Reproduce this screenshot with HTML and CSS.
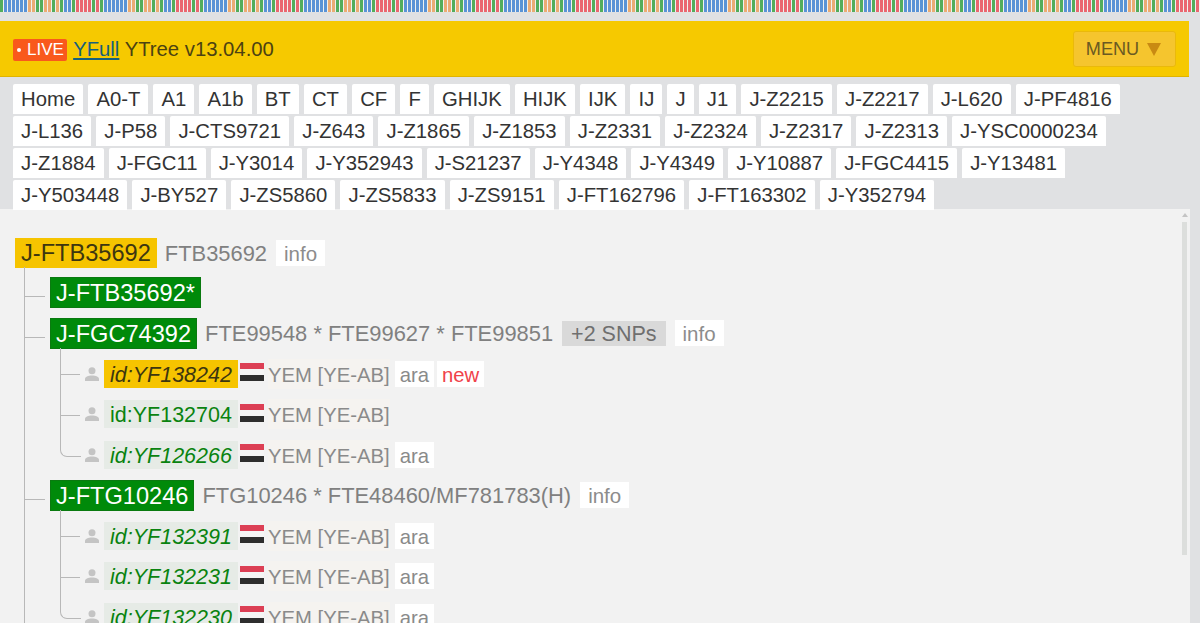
FILE: index.html
```html
<!DOCTYPE html>
<html lang="en">
<head>
<meta charset="utf-8">
<title>YFull YTree v13.04.00</title>
<link rel="stylesheet" href="styles.css">
</head>
<body>
<div class="stripe"></div>
<header class="topbar">
  <div class="brand"><span class="live"><span class="dot"></span>LIVE</span> <a class="yfull" href="#">YFull</a> YTree v13.04.00</div>
  <button class="menu">MENU <span class="arrow"></span></button>
</header>
<nav class="tabs">
  <a>Home</a><a>A0-T</a><a>A1</a><a>A1b</a><a>BT</a><a>CT</a><a>CF</a><a>F</a><a>GHIJK</a><a>HIJK</a><a>IJK</a><a>IJ</a><a>J</a><a>J1</a><a>J-Z2215</a><a>J-Z2217</a><a>J-L620</a><a>J-PF4816</a>
  <a>J-L136</a><a>J-P58</a><a>J-CTS9721</a><a>J-Z643</a><a>J-Z1865</a><a>J-Z1853</a><a>J-Z2331</a><a>J-Z2324</a><a>J-Z2317</a><a>J-Z2313</a><a>J-YSC0000234</a>
  <a>J-Z1884</a><a>J-FGC11</a><a>J-Y3014</a><a>J-Y352943</a><a>J-S21237</a><a>J-Y4348</a><a>J-Y4349</a><a>J-Y10887</a><a>J-FGC4415</a><a>J-Y13481</a>
  <a>J-Y503448</a><a>J-BY527</a><a>J-ZS5860</a><a>J-ZS5833</a><a>J-ZS9151</a><a>J-FT162796</a><a>J-FT163302</a><a>J-Y352794</a>
</nav>
<main class="panel">
  <div class="tree">
    <div class="root"><span class="node gold">J-FTB35692</span><span class="snps">FTB35692</span><span class="info">info</span></div>
    <ul class="lvl1">
      <li class="first"><div class="row"><span class="node green">J-FTB35692*</span></div></li>
      <li>
        <div class="row"><span class="node green">J-FGC74392</span><span class="snps">FTE99548 * FTE99627 * FTE99851</span><span class="more">+2 SNPs</span><span class="info">info</span></div>
        <ul class="lvl2">
          <li class="sample"><svg class="person" viewBox="0 0 14 14"><circle cx="7" cy="3.700" r="3.500"/><path d="M0 14v-2c0-2 3-3.500 7-3.500s7 1.500 7 3.500v2z"/></svg><span class="sid goldid">id:YF138242</span><span class="flag"></span><span class="geo">YEM [YE-AB]</span><span class="lang">ara</span><span class="new">new</span></li>
          <li class="sample"><svg class="person" viewBox="0 0 14 14"><circle cx="7" cy="3.700" r="3.500"/><path d="M0 14v-2c0-2 3-3.500 7-3.500s7 1.500 7 3.500v2z"/></svg><span class="sid upright">id:YF132704</span><span class="flag"></span><span class="geo">YEM [YE-AB]</span></li>
          <li class="sample"><svg class="person" viewBox="0 0 14 14"><circle cx="7" cy="3.700" r="3.500"/><path d="M0 14v-2c0-2 3-3.500 7-3.500s7 1.500 7 3.500v2z"/></svg><span class="sid">id:YF126266</span><span class="flag"></span><span class="geo">YEM [YE-AB]</span><span class="lang">ara</span></li>
        </ul>
      </li>
      <li>
        <div class="row"><span class="node green">J-FTG10246</span><span class="snps">FTG10246 * FTE48460/MF781783(H)</span><span class="info">info</span></div>
        <ul class="lvl2">
          <li class="sample"><svg class="person" viewBox="0 0 14 14"><circle cx="7" cy="3.700" r="3.500"/><path d="M0 14v-2c0-2 3-3.500 7-3.500s7 1.500 7 3.500v2z"/></svg><span class="sid">id:YF132391</span><span class="flag"></span><span class="geo">YEM [YE-AB]</span><span class="lang">ara</span></li>
          <li class="sample"><svg class="person" viewBox="0 0 14 14"><circle cx="7" cy="3.700" r="3.500"/><path d="M0 14v-2c0-2 3-3.500 7-3.500s7 1.500 7 3.500v2z"/></svg><span class="sid">id:YF132231</span><span class="flag"></span><span class="geo">YEM [YE-AB]</span><span class="lang">ara</span></li>
          <li class="sample"><svg class="person" viewBox="0 0 14 14"><circle cx="7" cy="3.700" r="3.500"/><path d="M0 14v-2c0-2 3-3.500 7-3.500s7 1.500 7 3.500v2z"/></svg><span class="sid">id:YF132230</span><span class="flag"></span><span class="geo">YEM [YE-AB]</span><span class="lang">ara</span></li>
        </ul>
      </li>
    </ul>
  </div>
  <div class="scrolltrack"><span class="scrollcap"></span><span class="scrollthumb"></span></div>
</main>
</body>
</html>
```
FILE: styles.css
```css
* { box-sizing: border-box; }
html, body { height: 100%; }
body {
  margin: 0;
  height: 623px;
  overflow: hidden;
  background: #e0e1e3;
  color: #333;
  font-family: "Liberation Sans", Arial, sans-serif;
  display: flex;
  flex-direction: column;
}
.stripe {
  height: 12px;
  flex: none;
  background: repeating-linear-gradient(90deg,
    #52ad5b 0 3px, #eef1f0 3px 4px, #5a93d6 4px 7px, #eef1f0 7px 8px, #5a93d6 8px 11px, #eef1f0 11px 12px,
    #5a93d6 12px 15px, #eef1f0 15px 16px, #5a93d6 16px 19px, #eef1f0 19px 20px, #5a93d6 20px 23px, #eef1f0 23px 24px,
    #5a93d6 24px 27px, #eef1f0 27px 28px, #eaab74 28px 31px, #eef1f0 31px 32px, #eaab74 32px 35px, #eef1f0 35px 36px,
    #52ad5b 36px 39px, #eef1f0 39px 40px, #52ad5b 40px 43px, #eef1f0 43px 44px, #eaab74 44px 47px, #eef1f0 47px 48px,
    #eaab74 48px 51px, #eef1f0 51px 52px, #52ad5b 52px 55px, #eef1f0 55px 56px, #eaab74 56px 59px, #eef1f0 59px 60px,
    #52ad5b 60px 63px, #eef1f0 63px 64px, #5a93d6 64px 67px, #eef1f0 67px 68px, #5a93d6 68px 71px, #eef1f0 71px 72px,
    #52ad5b 72px 75px, #eef1f0 75px 76px, #ea6670 76px 79px, #eef1f0 79px 80px, #ea6670 80px 83px, #eef1f0 83px 84px,
    #ea6670 84px 87px, #eef1f0 87px 88px, #ea6670 88px 91px, #eef1f0 91px 92px, #52ad5b 92px 95px, #eef1f0 95px 96px,
    #ea6670 96px 99px, #eef1f0 99px 100px);
}
.topbar {
  flex: none;
  margin-top: 9px;
  margin-right: 11px;
  height: 56px;
  padding: 0 13px;
  background: #f6c900;
  border-bottom: 1px solid #e0b400;
  display: flex;
  align-items: center;
  justify-content: space-between;
}
.brand { font-size: 20.300px; color: #4c4212; padding-top: 2px; }
.live {
  display: inline-block;
  background: #f9591c;
  color: #fff;
  font-size: 17px;
  line-height: 22px;
  padding: 0 3px 0 4px;
  margin-right: 1px;
  border-radius: 2px;
  vertical-align: 1px;
}
.dot {
  display: inline-block;
  width: 4px;
  height: 4px;
  margin: 0 6px 3px 0;
  background: #fff;
  border-radius: 50%;
}
.yfull { color: #17607c; text-decoration: underline; }
.menu {
  width: 103px;
  height: 36px;
  padding: 2px 2px 0 0;
  background: #f5c52e;
  border: 1px solid #eab90a;
  border-radius: 3px;
  color: #6a5a22;
  font: 18.100px "Liberation Sans", Arial, sans-serif;
  display: flex;
  align-items: center;
  justify-content: center;
  gap: 8px;
}
.arrow {
  width: 0;
  height: 0;
  border-left: 7px solid transparent;
  border-right: 7px solid transparent;
  border-top: 13px solid #c98a12;
}
.tabs {
  flex: none;
  position: relative;
  z-index: 1;
  padding: 7px 70px 0 13px;
  display: flex;
  flex-wrap: wrap;
  gap: 2px 5px;
  height: 132px;
  align-content: flex-start;
}
.tabs a {
  background: #fff;
  border-radius: 2px 2px 0 0;
  height: 30px;
  padding: 0 8.100px;
  font-size: 20.300px;
  line-height: 31px;
  color: #333;
}
.panel {
  flex: 1;
  margin-right: 10px;
  background: #f2f2f2;
  position: relative;
  overflow: hidden;
  padding: 29px 0 0 15px;
}
.root { display: flex; align-items: center; height: 30px; }
.node {
  font-size: 23.600px;
  line-height: 30px;
  height: 31px;
  padding: 0 6px;
}
.root .node { height: 30px; }
.gold { background: #f6c400; color: #3d3610; }
.green { background: #008a0a; color: #fff; border: 1px solid #0a7a10; padding: 0 5px; }
.snps { font-size: 21.900px; line-height: 30px; padding-top: 2px; color: #808080; margin-left: 8px; white-space: nowrap; }
.info {
  font-size: 20.500px;
  color: #8c8c8c;
  background: #fff;
  height: 26px;
  line-height: 28px;
  padding: 0 8px;
  margin-left: 9px;
}
.more {
  font-size: 21.500px;
  color: #6f6f6f;
  background: #d9d9d9;
  height: 25px;
  line-height: 27px;
  padding: 0 9px;
  margin-left: 9px;
  white-space: nowrap;
}
ul { list-style: none; margin: 0; padding: 0; }
.lvl1 { margin-left: 9px; padding-left: 26px; }
.lvl1 > li { position: relative; }
.lvl1 > li::before {
  content: "";
  position: absolute;
  left: -26px;
  top: -10px;
  bottom: 0;
  border-left: 1px solid #b8b8b8;
}
.lvl1 > li::after {
  content: "";
  position: absolute;
  left: -26px;
  top: 19px;
  width: 21px;
  border-top: 1px solid #b8b8b8;
}
.row { display: flex; align-items: center; height: 31px; margin-top: 9.500px; }
.first .row { margin-top: 9px; }
.lvl2 { margin-left: 10px; padding-left: 25px; }
.sample {
  position: relative;
  display: flex;
  align-items: center;
  height: 31px;
  margin-top: 9.500px;
}
.sample::before {
  content: "";
  position: absolute;
  left: -25px;
  top: -10px;
  bottom: 0;
  border-left: 1px solid #b8b8b8;
}
.sample::after {
  content: "";
  position: absolute;
  left: -25px;
  top: 16px;
  width: 20px;
  border-top: 1px solid #b8b8b8;
}
.sample:last-child::before {
  bottom: auto;
  height: 27px;
  width: 20px;
  border-bottom: 1px solid #b8b8b8;
  border-bottom-left-radius: 7px;
}
.sample:last-child::after { display: none; }
.person { width: 14px; height: 14px; margin-right: 5px; fill: #c4c4c4; flex: none; }
.sid {
  font-size: 21.500px;
  font-style: italic;
  color: #0a830f;
  background: #e6ebe6;
  line-height: 30px;
  height: 28px;
  padding: 0 6px;
}
.upright { font-style: normal; }
.goldid { background: #f6c400; color: #3d3610; }
.flag {
  width: 24px;
  height: 18px;
  margin: 0 4px 3px 2px;
  flex: none;
  background: linear-gradient(#dc3f55 0 6px, #f5f5f5 6px 12px, #2e2e2e 12px 18px);
}
.geo { font-size: 20.300px; line-height: 28px; padding-top: 2px; color: #8a8a8a; background: #f5f3f0; white-space: nowrap; }
.lang {
  font-size: 20.300px;
  color: #8a8a8a;
  background: #fff;
  padding: 0 5px;
  margin-left: 5px;
  height: 26px;
  line-height: 29px;
}
.new {
  font-size: 20.300px;
  color: #f0424a;
  background: #fff;
  padding: 0 5px;
  margin-left: 3px;
  height: 26px;
  line-height: 29px;
}
.scrolltrack {
  position: absolute;
  right: 2px;
  top: 4px;
  width: 7px;
  bottom: 0;
  display: flex;
  flex-direction: column;
  align-items: center;
}
.scrollcap {
  width: 0;
  height: 0;
  border-left: 3px solid transparent;
  border-right: 3px solid transparent;
  border-bottom: 4px solid #c4c4c4;
}
.scrollthumb { width: 5px; margin-top: 5px; height: 333px; background: #dcdedc; }
```
